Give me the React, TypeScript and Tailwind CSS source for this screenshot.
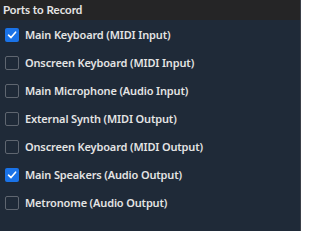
import React from "react";

const items: [string, boolean][] = [
  ["Main Keyboard (MIDI Input)", true],
  ["Onscreen Keyboard (MIDI Input)", false],
  ["Main Microphone (Audio Input)", false],
  ["External Synth (MIDI Output)", false],
  ["Onscreen Keyboard (MIDI Output)", false],
  ["Main Speakers (Audio Output)", true],
  ["Metronome (Audio Output)", false],
];

export default function App() {
  return (
    <div className="w-[301px] h-[231px] bg-[#1f2a38] border-r border-[#3a3f47] flex flex-col text-[#e4e4e4]">
      <div className="h-[20px] bg-[#252526] flex items-center px-[3px] text-[11.5px] font-bold font-['Lato',sans-serif]">
        Ports to Record
      </div>
      <div className="flex flex-col pt-[8px] gap-[14px] font-['Noto_Sans',sans-serif]">
        {items.map(([label, checked]) => (
          <div key={label} className="flex items-center h-[14px] pl-[5px] gap-[6px]">
            {checked ? (
              <div className="w-[14px] h-[14px] rounded-[2px] bg-[#1a73e8] flex items-center justify-center">
                <svg width="10" height="10" viewBox="0 0 10 10">
                  <path d="M1.5 5.2 L4 7.6 L8.6 2.2" stroke="white" strokeWidth="1.6" fill="none" strokeLinecap="round" strokeLinejoin="round" />
                </svg>
              </div>
            ) : (
              <div className="w-[14px] h-[14px] rounded-[2px] border border-[#5f6670]" />
            )}
            <span className="text-[11px] font-semibold tracking-[-0.15px] whitespace-nowrap">{label}</span>
          </div>
        ))}
      </div>
    </div>
  );
}
